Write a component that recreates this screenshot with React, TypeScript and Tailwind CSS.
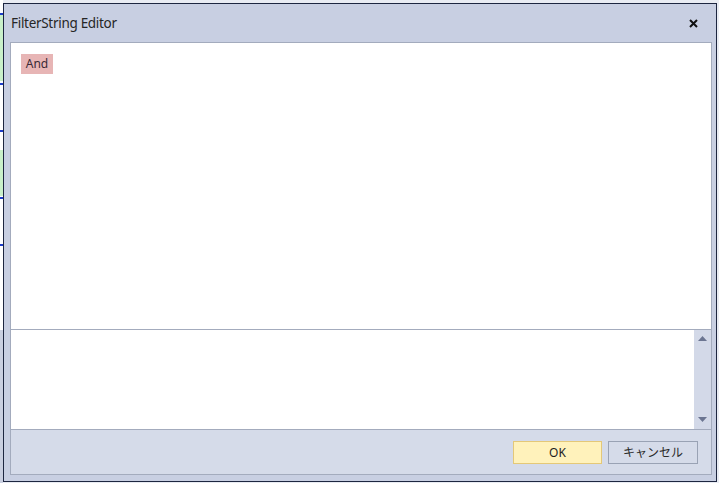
import React from "react";

const ScrollArrow = ({ up }: { up: boolean }) => (
  <svg width="9" height="5" viewBox="0 0 9 5">
    <path d={up ? "M0 5 L4.5 0 L9 5 Z" : "M0 0 L4.5 5 L9 0 Z"} fill="#6b7591" />
  </svg>
);

const App = () => {
  return (
    <div className="relative w-[719px] h-[483px] bg-[#e9ecf3] overflow-hidden pt-[3px] pl-[3px] font-['Noto_Sans','Noto_Sans_CJK_JP',sans-serif]">
      {/* bits of the window behind the dialog */}
      <div className="absolute left-0 top-0 w-[3px] h-[483px] bg-white">
        <div className="absolute top-[13px] w-[3px] h-[2px] bg-[#1c3cc8]" />
        <div className="absolute top-[15px] w-[3px] h-[66px] bg-[#c9f0c9]" />
        <div className="absolute top-[83px] w-[3px] h-[2px] bg-[#1c3cc8]" />
        <div className="absolute top-[130px] w-[3px] h-[2px] bg-[#1c3cc8]" />
        <div className="absolute top-[150px] w-[3px] h-[46px] bg-[#c9f0c9]" />
        <div className="absolute top-[197px] w-[3px] h-[2px] bg-[#1c3cc8]" />
        <div className="absolute top-[244px] w-[3px] h-[2px] bg-[#1c3cc8]" />
        <div className="absolute top-[330px] w-[3px] h-[153px] bg-[#c9cfe0]" />
      </div>

      <div className="w-[714px] h-[479px] border border-[#1d2640] bg-[#c8cfe2] flex flex-col">
        <div className="h-[38px] flex items-center justify-between pl-[7px] pr-[18px]">
          <span className="text-[13.5px] text-[#262626] tracking-[-0.3px]">FilterString Editor</span>
          <svg width="9" height="9" viewBox="0 0 9 9">
            <path d="M1 1 L8 8 M8 1 L1 8" stroke="#111" strokeWidth="2" />
          </svg>
        </div>

        <div className="ml-[6px] mr-[4px] h-[433px] border border-[#a3abbd] flex flex-col">
          <div className="h-[286px] bg-white pt-[11px] pl-[10px]">
            <div className="w-[32px] h-[20px] bg-[#e7b5b5] flex items-center justify-center text-[12px] text-[#3b2b36]">
              And
            </div>
          </div>
          <div className="h-[101px] border-y border-[#a3abbd] flex">
            <div className="flex-1 bg-white" />
            <div className="w-[17px] bg-[#d3d9e8] flex flex-col items-center justify-between pt-[6px] pb-[7px]">
              <ScrollArrow up />
              <ScrollArrow up={false} />
            </div>
          </div>
          <div className="flex-1 bg-[#d5dbe9] flex justify-end items-start pt-[11px] pr-[13px] gap-[6px]">
            <button className="w-[89px] h-[23px] bg-[#fff2bb] border border-[#e4c878] text-[12px] text-[#1e1e1e]">
              OK
            </button>
            <button className="w-[90px] h-[23px] bg-[#d5dbe9] border border-[#99a2b4] text-[12px] text-[#2a2a2a]">
              キャンセル
            </button>
          </div>
        </div>
      </div>
    </div>
  );
};

export default App;
